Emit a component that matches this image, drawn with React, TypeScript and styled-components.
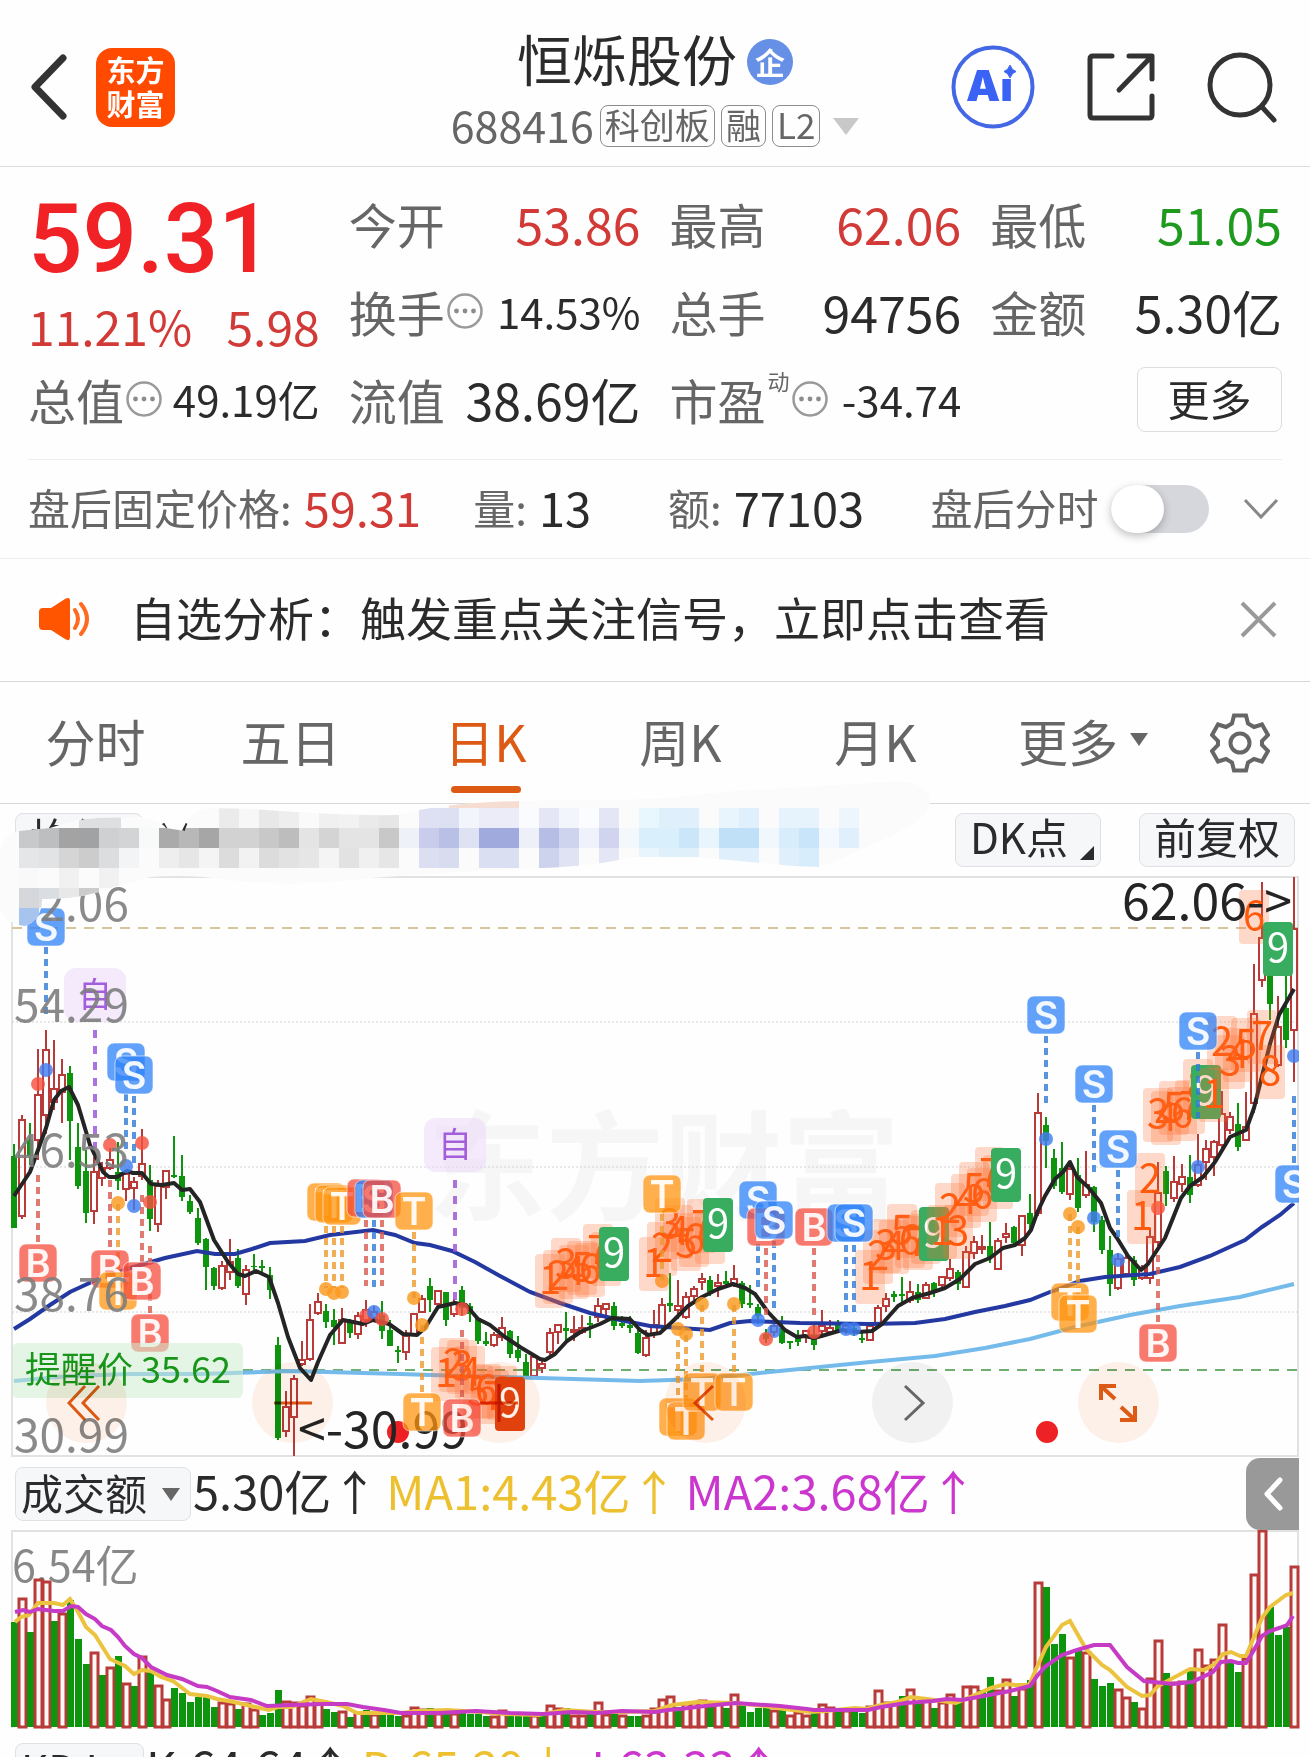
import React, { useState } from "react";
import styled, { createGlobalStyle, css } from "styled-components";

const FONT = '"Noto Sans CJK SC", "Noto Sans", sans-serif';
const RED = "#d13a36";
const BRIGHT_RED = "#f02226";
const GREEN = "#1f9a1f";
const INK = "#2b2b2b";
const GREY = "#666666";
const ORANGE = "#dd5a14";

const GlobalStyle = createGlobalStyle`
  *, *::before, *::after { box-sizing: border-box; }
  body { margin: 0; background: #ffffff; }
  button, input, select { font: inherit; color: inherit; margin: 0; }
  button { border: 0; padding: 0; background: none; cursor: pointer; }
`;

const Page = styled.main`
  height: 100vh;
  overflow: hidden;
  background: #fefefe;
  color: ${INK};
  font-family: ${FONT};
  font-size: 48px;
  line-height: 60px;
  white-space: nowrap;
`;

/* ---------- header ---------- */

const Header = styled.header`
  display: grid;
  grid-template-columns: 1fr auto 1fr;
  height: 167px;
  padding: 0 31px;
  border-bottom: 1px solid #dcdcdc;
`;

const HeaderSide = styled.div<{ $end?: boolean }>`
  display: flex;
  align-items: center;
  padding-top: 8px;
  gap: ${(p) => (p.$end ? "52px" : "28px")};
  justify-content: ${(p) => (p.$end ? "flex-end" : "flex-start")};
`;

const IconButton = styled.button`
  display: flex;
  align-items: center;
  justify-content: center;
`;

const Logo = styled.a`
  display: flex;
  align-items: center;
  justify-content: center;
  width: 79px;
  height: 79px;
  border-radius: 16px;
  background: #ff4a00;
  color: #ffffff;
  font-size: 29px;
  font-weight: 700;
  line-height: 34px;
  padding-bottom: 2px;
  text-decoration: none;
  white-space: pre;
`;

const Heading = styled.div`
  display: flex;
  flex-direction: column;
  align-items: center;
  padding-top: 22px;
`;

const TitleRow = styled.div`
  display: flex;
  align-items: center;
  gap: 10px;
`;

const Title = styled.h1`
  margin: 0;
  font-size: 55px;
  font-weight: 400;
  line-height: 70px;
`;

const CompanyBadge = styled.span`
  display: flex;
  align-items: center;
  justify-content: center;
  width: 46px;
  height: 46px;
  margin-top: 10px;
  border-radius: 50%;
  background: #6690e6;
  color: #ffffff;
  font-size: 30px;
  font-weight: 700;
  line-height: 40px;
  padding-bottom: 2px;
`;

const CodeRow = styled.div`
  display: flex;
  align-items: center;
  gap: 6px;
  height: 68px;
  color: ${GREY};
  font-size: 43px;
  line-height: 56px;
`;

const Code = styled.span`
  padding-bottom: 4px;
`;

const Tag = styled.span`
  display: flex;
  align-items: center;
  height: 42px;
  padding: 0 4px 4px;
  border: 1px solid #8c8c8c;
  border-radius: 8px;
  font-size: 35px;
  line-height: 36px;
`;

const ExpandButton = styled(IconButton)`
  margin-left: 7px;
`;

const Triangle = styled.span<{ $size: number; $color: string }>`
  display: inline-block;
  border-style: solid;
  border-color: ${(p) => p.$color} transparent transparent;
  border-width: ${(p) => p.$size + 4}px ${(p) => p.$size}px 0;
`;

/* ---------- quote ---------- */

const Quote = styled.section`
  display: grid;
  grid-template-columns: repeat(4, minmax(0, 1fr));
  grid-auto-rows: 88px;
  column-gap: 29px;
  margin: 0 28px;
  padding: 12px 0 16px;
  border-bottom: 1px solid #eeeeee;
`;

const PriceBlock = styled.div`
  grid-row: span 2;
  display: flex;
  flex-direction: column;
  color: ${RED};
`;

const Price = styled.strong`
  padding-top: 8px;
  color: ${BRIGHT_RED};
  font-family: Roboto, sans-serif;
  font-size: 96px;
  font-weight: 500;
  line-height: 104px;
`;

const Change = styled.div`
  display: flex;
  justify-content: space-between;
  line-height: 68px;
`;

const Stat = styled.div`
  display: flex;
  align-items: center;
  justify-content: space-between;
`;

const StatLabel = styled.span`
  display: flex;
  align-items: center;
  gap: 2px;
  color: ${GREY};
`;

const StatValue = styled.span<{ $color?: string; $small?: boolean }>`
  color: ${(p) => p.$color ?? INK};
  font-size: ${(p) => (p.$small ? 42 : 50)}px;
`;

const Sup = styled.sup`
  align-self: flex-start;
  font-size: 22px;
  line-height: 22px;
`;

const MoreButton = styled.button`
  justify-self: end;
  align-self: center;
  width: 145px;
  height: 65px;
  padding-bottom: 4px;
  border: 1px solid #dddddd;
  border-radius: 8px;
  font-size: 42px;
  line-height: 60px;
`;

/* ---------- after hours ---------- */

const AfterHours = styled.section`
  display: grid;
  grid-template-columns: 446fr 195fr 263fr 312fr auto;
  align-items: center;
  height: 99px;
  padding: 0 30px 0 28px;
  border-bottom: 1px solid #eeeeee;
`;

const Pair = styled.label`
  display: flex;
  align-items: center;
  gap: 12px;
  color: ${GREY};
  font-size: 42px;
`;

const PairText = styled.span`
  padding-bottom: 4px;
`;

const PairValue = styled(PairText)<{ $color?: string }>`
  color: ${(p) => p.$color ?? INK};
  font-size: 47px;
`;

const Switch = styled.input`
  appearance: none;
  width: 98px;
  height: 48px;
  border-radius: 24px;
  background: #d5d7dd;
  cursor: pointer;
  &::before {
    content: "";
    display: block;
    width: 53px;
    height: 48px;
    border-radius: 26px;
    background: #ffffff;
    box-shadow: 0 3px 8px rgba(0, 0, 0, 0.25);
  }
  &:checked { background: ${ORANGE}; }
  &:checked::before { margin-left: auto; }
`;

/* ---------- notice ---------- */

const Notice = styled.section`
  display: flex;
  align-items: center;
  height: 123px;
  padding: 0 33px 2px 38px;
  border-bottom: 1px solid #d9d9d9;
`;

const NoticeText = styled.a`
  flex: 1;
  margin-left: 38px;
  padding-bottom: 6px;
  color: ${INK};
  font-size: 46px;
  text-decoration: none;
`;

/* ---------- tabs ---------- */

const Tabs = styled.nav`
  display: flex;
  height: 122px;
  border-bottom: 1px solid #d9d9d9;
`;

const Tab = styled.button<{ $active?: boolean; $menu?: boolean }>`
  flex: 1;
  position: relative;
  display: flex;
  align-items: center;
  justify-content: ${(p) => (p.$menu ? "flex-end" : "center")};
  gap: 12px;
  padding: ${(p) => (p.$menu ? "0 22px 6px 0" : "0 13px 6px 9px")};
  color: ${(p) => (p.$active ? ORANGE : GREY)};
  font-size: 50px;
  ${(p) =>
    p.$active &&
    css`
      &::after {
        content: "";
        position: absolute;
        left: calc(50% - 37px);
        bottom: 10px;
        width: 70px;
        height: 7px;
        border-radius: 4px;
        background: ${ORANGE};
      }
    `}
`;

const SettingsButton = styled(IconButton)`
  width: 140px;
`;

/* ---------- chart panel ---------- */

const ChartPanel = styled.section`
  position: relative;
`;

const Toolbar = styled.div`
  display: flex;
  align-items: flex-start;
  gap: 38px;
  height: 68px;
  padding: 9px 15px 0;
`;

const ChipButton = styled.button<{ $push?: boolean }>`
  display: flex;
  align-items: flex-end;
  gap: 10px;
  height: 54px;
  margin-left: ${(p) => (p.$push ? "auto" : "0")};
  padding: 0 14px;
  border: 1px solid #dfe1e5;
  border-radius: 8px;
  background: #f6f7f9;
  font-size: 42px;
  line-height: 52px;
`;

const Corner = styled.i`
  margin: 0 -8px 6px 2px;
  border-style: solid;
  border-width: 0 0 14px 14px;
  border-color: transparent transparent ${INK};
`;

const ChipText = styled.span`
  height: 56px;
`;

const ChipTail = styled.span`
  width: 4px;
`;

const Redaction = styled.svg`
  position: absolute;
  left: 0;
  top: -24px;
  width: 940px;
  height: 150px;
  pointer-events: none;
`;

const ChartArea = styled.div`
  position: relative;
`;

const Plot = styled.svg`
  display: block;
  width: 100%;
  height: auto;
  font-family: ${FONT};
`;

const Controls = styled.div`
  position: absolute;
  left: 46px;
  right: 151px;
  bottom: 15px;
  display: flex;
  justify-content: space-between;
  mix-blend-mode: multiply;
`;

const RoundButton = styled.button<{ $grey?: boolean }>`
  display: flex;
  align-items: center;
  justify-content: center;
  width: 81px;
  height: 81px;
  border-radius: 50%;
  background: ${(p) => (p.$grey ? "#f2f2f2" : "#fdf1e9")};
`;

const IndicatorRow = styled.div`
  display: flex;
  align-items: center;
  gap: 8px;
  height: 72px;
  padding: 0 11px 0 15px;
  font-size: 47px;
`;

const Picker = styled.span`
  position: relative;
  display: flex;
  align-items: center;
  margin-right: -6px;
`;

const PickerSelect = styled.select<{ $width: number }>`
  appearance: none;
  width: ${(p) => p.$width}px;
  height: 54px;
  padding: 0 5px 4px;
  border: 1px solid #dfe1e5;
  border-radius: 8px;
  background: #f6f7f9;
  font-size: 42px;
  line-height: 48px;
`;

const PickerMark = styled.span`
  position: absolute;
  right: 11px;
  display: flex;
  pointer-events: none;
`;

const Reading = styled.span<{ $color?: string }>`
  color: ${(p) => p.$color ?? INK};
  line-height: 64px;
  padding-bottom: 8px;
`;

const DrawerButton = styled.button`
  align-self: stretch;
  display: flex;
  align-items: center;
  justify-content: center;
  width: 53px;
  margin-left: auto;
  border-radius: 14px 0 0 14px;
  background: #999999;
`;

/* ---------- data ---------- */

const STEP = 8;
const X0 = 14;
const BAR_RED = "#b83b3a";
const BAR_GREEN = "#0d960d";

// One candle per entry: colour, high, body top, body bottom, low.
const CANDLES = `g1144,1156,1228,1228 r1115,1120,1216,1219 g1123,1140,1156,1165 r1049,1095,1140,1160 r1030,1050,1115,1134 r1040,1089,1102,1110 r1059,1075,1092,1123 g1066,1073,1121,1160 g1123,1147,1186,1189 g1150,1171,1213,1223
r1157,1172,1211,1224 r1162,1168,1178,1186 r1148,1160,1168,1170 g1142,1172,1181,1190 r1170,1174,1189,1201 r1177,1182,1188,1210 r1129,1164,1176,1180 g1165,1180,1219,1231 r1180,1186,1224,1232 r1170,1171,1187,1199
g1136,1175,1177,1178 g1155,1176,1197,1201 g1195,1201,1212,1214 g1208,1218,1243,1245 g1238,1239,1267,1290 g1267,1268,1286,1290 r1261,1266,1288,1290 r1239,1262,1272,1280 g1249,1258,1286,1288 r1265,1270,1294,1305
g1254,1266,1267,1270 g1260,1266,1268,1272 g1267,1275,1290,1299 g1337,1345,1438,1440 r1391,1407,1431,1437 r1375,1379,1417,1456 r1341,1360,1364,1366 r1304,1320,1359,1361 r1293,1302,1313,1315 g1304,1311,1322,1328
g1309,1320,1327,1345 r1308,1320,1343,1344 g1319,1322,1333,1338 r1312,1316,1334,1339 r1300,1310,1320,1327 r1306,1312,1318,1322 g1301,1315,1331,1339 g1320,1330,1346,1346 g1346,1350,1352,1363 r1330,1336,1352,1360
r1313,1314,1334,1336 r1295,1299,1312,1313 g1278,1286,1300,1312 r1290,1291,1304,1306 g1292,1292,1320,1326 r1299,1303,1314,1317 g1286,1290,1308,1316 g1303,1306,1314,1322 g1317,1318,1341,1344 g1332,1341,1344,1346
r1332,1335,1345,1347 r1317,1328,1337,1341 g1330,1331,1354,1358 g1336,1350,1358,1362 g1354,1362,1376,1376 r1354,1357,1376,1376 r1358,1364,1368,1373 r1328,1333,1352,1357 r1324,1325,1332,1344 g1312,1328,1331,1342
r1316,1330,1332,1341 r1315,1328,1332,1334 g1316,1323,1325,1338 r1298,1306,1317,1322 r1303,1304,1309,1319 g1302,1306,1326,1330 g1316,1323,1326,1328 g1316,1325,1328,1333 g1326,1333,1353,1354 r1330,1338,1355,1357
r1310,1325,1334,1338 r1298,1305,1326,1329 g1273,1303,1306,1312 r1280,1306,1310,1319 r1292,1297,1317,1319 r1286,1289,1296,1300 r1273,1279,1282,1290 g1276,1280,1292,1296 r1274,1283,1286,1297 g1271,1281,1284,1286
r1265,1279,1284,1287 g1281,1283,1304,1308 g1285,1303,1305,1308 g1304,1307,1316,1324 g1329,1334,1339,1343 r1321,1326,1332,1336 g1316,1328,1343,1344 g1341,1341,1343,1349 g1330,1337,1342,1346 r1330,1331,1337,1343
g1322,1334,1345,1350 r1310,1326,1331,1338 r1320,1328,1332,1335 g1320,1323,1330,1333 r1322,1326,1330,1334 g1322,1328,1332,1336 g1333,1338,1340,1343 r1323,1326,1340,1341 r1305,1308,1324,1327 r1293,1299,1306,1312
g1291,1294,1297,1302 g1277,1294,1296,1303 r1281,1292,1300,1303 g1284,1292,1300,1303 r1282,1285,1298,1299 g1282,1283,1293,1297 r1276,1277,1285,1289 r1259,1269,1278,1281 g1270,1272,1284,1290 r1246,1252,1287,1287
r1236,1242,1253,1259 r1235,1247,1249,1254 g1222,1246,1258,1263 r1238,1241,1269,1270 r1223,1234,1237,1243 g1226,1227,1243,1246 r1215,1216,1245,1256 g1194,1213,1224,1230 r1093,1113,1213,1216 g1117,1125,1141,1168
g1149,1158,1186,1189 g1142,1168,1192,1194 r1165,1169,1194,1200 g1158,1175,1208,1212 r1151,1185,1195,1198 g1186,1187,1222,1232 g1216,1220,1250,1254 g1236,1250,1284,1296 r1253,1259,1288,1290 r1254,1258,1274,1276
g1256,1260,1280,1286 r1265,1269,1278,1280 r1228,1237,1278,1284 r1162,1193,1242,1246 g1166,1171,1194,1206 r1156,1182,1198,1202 r1164,1177,1184,1192 g1155,1177,1195,1203 r1134,1165,1185,1187 r1140,1149,1162,1180
r1140,1142,1157,1176 r1091,1114,1145,1148 r1112,1117,1130,1134 g1103,1124,1147,1151 r1092,1127,1140,1141 r964,1014,1103,1113 r882,938,980,987 g970,975,1004,1020 r996,1027,1065,1067 g970,1008,1040,1048 r877,929,1030,1082`
  .split(/\s+/)
  .map((s) => ({ up: s[0] === "r", v: s.slice(1).split(",").map(Number) }));

// Turnover bars: colour and distance of the bar top from the row top, in thirds of a pixel.
const VOLUMES = `g516 r444 g546 r387 r393 g513 r490 g450 g567 g642 r607 g675 r651 g618 r699 g709 r618 g665 r706 r747 g714 g729 g756 g740 g740 g771 r757 r760 g777 r760 r777 g795 g789 g720 r753 r756 r765 r738 r760 g777 g786 r783 g800 r786 g780 r792 g790 g790 g798 r795 r771 r777 g775 r790 g790 r790 g790 g792 g792 g798 r798 r781 g797 g797 g797 r795 g797 r765 r774 g774 r795 r795 g792 r757 r792 g792 r795 g798 g797 r795
r775 r747 r738 g770 r760 r757 r750 g766 r757 g774 r732 g766 g786 g774 g770 r780 g780 r795 r786 r795 g780 r763 r771 g783 r780 g783 g789 r768 r720 r757 r760 g738 r717 g756 r750 g774 r757 r732 g757 r708 r708 g720 g681 r720 r687 g738 r714 g690 r396 g411 g582 g552 r620 g600 r606 g687 g708 g699 r717 r741 g756 r774 r684 r570 g669 r696 r693 g663 r597 r645 r627 r522 g639 g666 r624 r372 r240 g471 g555 g531 r348`
  .split(/\s+/)
  .map((s) => ({ up: s[0] === "r", top: Math.round(1450 + Number(s.slice(1)) / 3) }));

const MA_SHORT =
  "14,1196 30,1172 46,1128 54,1100 61,1091 69,1087 78,1105 90,1145 103,1172 109,1177 117,1177 127,1171 133,1173 142,1173 151,1184 162,1185 174,1183 182,1190 190,1189 200,1202 214,1240 228,1262 238,1274 245,1276 256,1271 269,1277 278,1303 288,1337 300,1368 311,1380 318,1362 330,1335 343,1320 363,1324 373,1320 389,1324 403,1334 417,1335 425,1328 438,1307 455,1303 466,1305 478,1319 490,1325 505,1337 520,1347 540,1359 545,1360 555,1354 567,1341 582,1331 600,1324 612,1318 630,1319 640,1330 648,1335 660,1333 672,1322 688,1306 702,1297 718,1289 733,1284 745,1288 755,1294 768,1312 785,1330 797,1337 805,1336 814,1338 825,1335 842,1330 858,1332 872,1331 882,1324 898,1306 912,1298 930,1293 945,1288 960,1279 975,1264 990,1258 1003,1248 1015,1245 1025,1238 1031,1230 1037,1213 1045,1196 1055,1179 1063,1172 1070,1162 1077,1177 1088,1187 1101,1203 1110,1228 1117,1238 1128,1256 1141,1270 1148,1264 1165,1238 1181,1198 1190,1186 1203,1177 1215,1162 1230,1137 1246,1130 1254,1108 1262,1076 1270,1044 1279,1015 1294,989";
const MA_MID =
  "14,1329 30,1319 50,1305 70,1292 96,1280 130,1268 165,1258 197,1251 215,1254 235,1254 252,1249 270,1243 305,1241 330,1235 373,1230 395,1235 415,1243 430,1245 452,1251 475,1262 500,1276 530,1292 560,1303 590,1313 620,1320 650,1326 680,1328 710,1330 730,1323 750,1321 800,1323 870,1324 915,1323 945,1319 975,1312 1005,1306 1030,1300 1050,1292 1080,1281 1105,1277 1150,1274 1180,1267 1210,1256 1245,1240 1262,1227 1280,1215 1294,1203";
const MA_LONG =
  "14,1381 70,1376 130,1374 200,1374 290,1371 400,1374 430,1375 540,1378 640,1381 700,1379 760,1373 870,1362 935,1356 985,1348 1030,1339 1075,1327 1130,1315 1180,1306 1240,1297 1294,1284";
const VOL_MA1 =
  "15,1622 21,1617 29,1615 38,1603 54,1603 63,1605 70,1599 77,1610 86,1627 95,1635 110,1659 125,1666 134,1674 142,1670 151,1671 161,1677 173,1681 190,1694 207,1696 217,1699 234,1702 251,1706 269,1710 278,1707 292,1707 303,1702 311,1699 326,1702 343,1706 357,1713 384,1713 401,1713 418,1711 447,1710 480,1712 505,1714 539,1715 564,1710 597,1712 622,1712 655,1711 672,1705 697,1702 734,1703 764,1706 784,1709 810,1712 826,1711 855,1708 866,1709 881,1705 897,1702 911,1697 927,1699 956,1703 975,1695 991,1688 1006,1684 1016,1685 1029,1685 1037,1667 1046,1647 1062,1625 1070,1621 1086,1649 1102,1665 1110,1670 1127,1687 1142,1696 1150,1695 1158,1686 1173,1678 1190,1669 1204,1670 1215,1664 1223,1654 1231,1652 1240,1656 1246,1656 1254,1637 1262,1618 1270,1607 1286,1595 1293,1593";
const VOL_MA2 =
  "15,1612 23,1610 30,1612 38,1609 54,1611 63,1611 71,1606 78,1607 86,1614 95,1619 102,1626 111,1630 118,1637 125,1646 134,1654 142,1658 151,1667 167,1675 182,1679 198,1686 207,1687 217,1691 230,1697 251,1700 267,1706 292,1705 322,1704 347,1704 363,1707 384,1710 401,1713 439,1713 476,1711 510,1713 543,1714 572,1712 597,1713 622,1711 655,1712 668,1710 680,1709 705,1706 736,1703 749,1704 780,1706 807,1709 814,1710 868,1710 881,1707 906,1703 933,1701 947,1699 962,1700 989,1695 1010,1691 1030,1686 1037,1676 1046,1666 1062,1655 1077,1650 1094,1645 1110,1645 1127,1667 1144,1681 1173,1684 1192,1682 1213,1672 1221,1662 1231,1661 1238,1663 1246,1663 1254,1650 1262,1636 1270,1631 1279,1628 1287,1625 1293,1616";

type Kind = "S" | "B" | "T";
const BADGE: Record<Kind, string> = { S: "#2b80f8", B: "#f64c3c", T: "#ff940f" };
const STEM: Record<string, string> = { S: "#2f79d6", B: "#d85a50", T: "#eb9a2d", P: "#9a4fd6" };
const DOT: Record<Kind, string> = { S: "#3f7df0", B: "#f6503f", T: "#fb9a1e" };

const BADGES: [Kind, number, number][] = [
  ["S", 46, 927], ["S", 126, 1062], ["S", 134, 1075], ["B", 38, 1263], ["B", 110, 1269], ["T", 118, 1291],
  ["B", 142, 1281], ["B", 150, 1333], ["T", 326, 1202], ["T", 334, 1204], ["T", 342, 1206], ["B", 366, 1198],
  ["S", 374, 1199], ["B", 382, 1199], ["T", 414, 1211], ["T", 422, 1412], ["B", 462, 1418], ["T", 662, 1194],
  ["S", 758, 1200], ["B", 766, 1227], ["S", 774, 1220], ["B", 814, 1227], ["S", 846, 1223], ["S", 854, 1223],
  ["T", 678, 1417], ["T", 686, 1421], ["T", 702, 1392], ["T", 734, 1392], ["S", 1046, 1015], ["S", 1094, 1084],
  ["S", 1118, 1149], ["T", 1070, 1302], ["T", 1078, 1314], ["B", 1158, 1343], ["S", 1198, 1031], ["S", 1294, 1184],
];

const STEMS: [string, number, number, number][] = [
  ["P", 95, 1030, 1148], ["P", 455, 1180, 1300], ["S", 46, 947, 1015], ["B", 38, 1175, 1243], ["S", 126, 1094, 1150],
  ["S", 134, 1096, 1163], ["B", 110, 1180, 1250], ["T", 118, 1204, 1272], ["B", 142, 1195, 1262], ["B", 150, 1246, 1313],
  ["T", 326, 1226, 1288], ["T", 334, 1226, 1288], ["T", 342, 1226, 1288], ["B", 366, 1220, 1286], ["S", 374, 1220, 1288],
  ["B", 382, 1220, 1286], ["T", 414, 1232, 1298], ["T", 422, 1325, 1392], ["B", 462, 1330, 1400], ["T", 662, 1214, 1280],
  ["S", 758, 1244, 1288], ["B", 766, 1248, 1315], ["S", 774, 1241, 1308], ["B", 814, 1248, 1315], ["S", 846, 1245, 1312],
  ["S", 854, 1245, 1312], ["T", 678, 1340, 1398], ["T", 686, 1335, 1400], ["T", 702, 1305, 1372], ["T", 734, 1305, 1372],
  ["S", 1046, 1036, 1103], ["S", 1094, 1105, 1172], ["S", 1118, 1170, 1237], ["T", 1070, 1214, 1282], ["T", 1078, 1227, 1295],
  ["B", 1158, 1255, 1322], ["S", 1198, 1052, 1118], ["S", 1294, 1096, 1163],
];

const DOTS: [Kind, number, number][] = [
  ["S", 46, 1070], ["B", 38, 1084], ["B", 110, 1145], ["S", 126, 1166], ["B", 142, 1143], ["T", 118, 1203], ["S", 134, 1206],
  ["B", 150, 1202], ["T", 326, 1289], ["T", 334, 1293], ["T", 342, 1292], ["B", 366, 1316], ["S", 374, 1312], ["B", 382, 1319],
  ["T", 414, 1298], ["T", 422, 1325], ["B", 462, 1309], ["T", 662, 1281], ["T", 678, 1329], ["T", 686, 1334], ["T", 702, 1304],
  ["T", 734, 1304], ["S", 758, 1320], ["S", 774, 1331], ["B", 766, 1339], ["B", 814, 1332], ["S", 846, 1329], ["S", 854, 1329],
  ["S", 1046, 1139], ["S", 1094, 1218], ["S", 1118, 1260], ["S", 1198, 1167], ["S", 1294, 1056], ["T", 1070, 1214],
  ["T", 1078, 1227], ["B", 1158, 1208],
];

// Nine-turn counts: centre of the first tile, tile tops, colour of the closing tile.
const COUNTS: { x: number; tops: number[]; end: string }[] = [
  { x: 446, tops: [1347, 1338, 1340, 1346, 1365, 1364, 1370, 1366, 1377], end: "#e2440e" },
  { x: 550, tops: [1254, 1250, 1238, 1245, 1241, 1243, 1224, 1232, 1227], end: "#38ad60" },
  { x: 654, tops: [1237, 1222, 1198, 1205, 1217, 1213, 1199, 1210, 1198], end: "#38ad60" },
  { x: 870, tops: [1250, 1230, 1219, 1220, 1204, 1214, 1216, 1210, 1207], end: "#38ad60" },
  { x: 942, tops: [1205, 1183, 1205, 1174, 1162, 1168, 1147, 1155, 1148], end: "#38ad60" },
  { x: 1142, tops: [1190, 1153, 1088, 1091, 1081, 1087, 1080, 1059, 1065], end: "#38ad60" },
  { x: 1214, tops: [1068, 1016, 1035, 1028, 1018, 890, 1010, 1045, 922], end: "#38ad60" },
];

const MOSAIC: [number, string][] = [
  [808, "219ebebeb 239f7f7f7 259e8e8e8 279eeeeee 299fafafa 319f0f0f0 339f2f2f2 359eaeaea 379e6e6e6 419dfe0f3 439dde0f2 459f3f5fd 479ececf8 499ececf8 519fafbff 539e4e6f5 559f3f5fd 579fafcff 599e4e6f5 639e8f6fd 659dff0fb 679dfeffb 719e9f5fd 739dfeffb 779e6f2fc 799e6f2fc 839eef6fd"],
  [828, "019c8c9cb 039bdbec0 059a3a3a3 079a1a2a4 099cfd0d2 119d3d4d6 139f8f9f9 159aaaaaa 179b8b8b8 199a6a6a6 219d2d2d2 239d2d2d2 259c8c8c8 279bdbdbd 299e4e4e4 319d4d4d4 339e4e4e4 359e4e4e4 379c8c8c8 399eff1f8 419c9cceb 439b9c0e6 459dfe2f2 479a1aadd 499a1aadd 519edeff9 539b7bee6 559cfd4ee 579f0f2fb 599d0d4ee 619f3f8fd 639d9effc 659d9effc 679cbe6f8 699e9f5fd 719bfe0f7 739bfe0f7 759f0f8fe 779d8edfb 799c9e5f9 819f3f9fe 839dfeffb"],
  [848, "019e4e6e8 039e2e3e4 059d5d5d5 079cccccc 099dcdddf 119f3f4f6 159eeeeee 179e6e6e6 199f4f4f4 219dcdcdc 239f2f2f2 259dcdcdc 279e2e2e2 299e6e6e6 319f4f4f4 339e2e2e2 359f0f0f0 379e6e6e6 419dcdff1 439d7dcef 479dbdff2 499dbdff2 539cdd2ed 559e0e3f4 599e4e6f5 639e9f5fd 659dff0fb 679dff0fb 719dfeffb 739dfeffb 779dfeffb 799d8edfb"],
  [868, "019f9f9f9 059f1f1f1 099f1f1f1"],
  [888, "019d5d7da 039dadde2 059e8e8e8 079cccccc"],
  [908, "019a7c4ee"],
];

const BLOB =
  "M0 853 Q2 835 19 831 L50 828 Q75 819 100 818 L140 817 Q160 820 166 828 L185 831 Q190 809 210 808 L250 809 Q340 816 398 815 Q440 803 520 801 L655 799 L735 791 L889 782 Q930 780 930 803 Q926 820 889 837 L859 850 L839 860 L819 867 L793 866 L697 857 L630 857 Q600 866 540 868 L460 872 L370 878 Q290 888 230 880 Q190 874 150 877 Q130 883 110 888 Q80 900 42 899 Q42 920 25 926 Q6 924 0 908 Z";

/* ---------- drawings ---------- */

const InfoIcon = () => (
  <svg width="36" height="36" viewBox="0 0 36 36" fill="none">
    <circle cx="18" cy="18" r="16.5" stroke="#9a9a9a" strokeWidth="2.5" />
    {[9.5, 18, 26.5].map((x) => (
      <circle key={x} cx={x} cy="18" r="2.4" fill="#8c8c8c" />
    ))}
  </svg>
);

const Redacted = () => (
  <Redaction viewBox="0 780 940 150" aria-hidden="true">
    <clipPath id="blob">
      <path d={BLOB} />
    </clipPath>
    <path d="M162 824 l4 7 M188 824 l-4 8" stroke={INK} strokeWidth="5" />
    <path d={BLOB} fill="#fbfbfb" />
    <g clipPath="url(#blob)">
      <rect x="449" y="801" width="70" height="7" fill="#f6ddd2" />
      <rect x="79" y="815" width="42" height="13" fill="#dedfe1" />
      {MOSAIC.map(([y, cells]) =>
        cells.split(" ").map((c) => (
          <rect key={y + c} x={Number(c.slice(0, 3))} y={y} width="20" height="20" fill={"#" + c.slice(3)} />
        )),
      )}
    </g>
  </Redaction>
);

const PriceChart = () => (
  <Plot viewBox="0 872 1310 586" role="img" aria-label="日K">
    <clipPath id="plot">
      <rect x="11" y="873" width="1288" height="585" />
    </clipPath>
    <text x="428" y="1211" fontSize="118" fontWeight="700" fill="#f6f6f6">东方财富</text>
    <rect x="12" y="877" width="1286" height="579" fill="none" stroke="#e2e2e2" strokeWidth="2" />
    {[1022, 1167, 1312].map((y) => (
      <line key={y} x1="12" x2="1298" y1={y} y2={y} stroke="#d2d2d2" strokeDasharray="2 2" />
    ))}
    <line x1="12" x2="1298" y1="928" y2="928" stroke="#d6c59c" strokeWidth="2" strokeDasharray="10 8" />
    <g clipPath="url(#plot)">
      <line x1="243" x2="1298" y1="1370" y2="1370" stroke="#6fae6f" strokeWidth="2" strokeDasharray="10 8" />
      {CANDLES.map(({ up, v: [hi, top, bottom, lo] }, i) => {
        const x = X0 + i * STEP;
        const h = Math.max(bottom - top, 1);
        return up ? (
          <g key={i} stroke={BAR_RED} strokeWidth="2" fill="none">
            <path d={`M${x} ${hi}V${top}M${x} ${bottom}V${lo}`} />
            <rect x={x - 3} y={top} width="6" height={h} />
          </g>
        ) : (
          <g key={i} fill={BAR_GREEN}>
            <rect x={x - 1} y={hi} width="2" height={lo - hi} />
            <rect x={x - 3} y={top} width="6" height={h} />
          </g>
        );
      })}
      <polyline points={MA_LONG} fill="none" stroke="#74bbeb" strokeWidth="4" />
      <polyline points={MA_MID} fill="none" stroke="#2338a0" strokeWidth="4" />
      <polyline points={MA_SHORT} fill="none" stroke="#242424" strokeWidth="4" strokeLinejoin="round" />
      {DOTS.map(([k, x, y], i) => (
        <circle key={i} cx={x} cy={y} r="7" fill={DOT[k]} fillOpacity="0.82" />
      ))}
      <circle cx="398" cy="1432" r="11" fill="#ee2224" />
      <circle cx="1047" cy="1432" r="11" fill="#ee2224" />
      <text x="298" y="1448" fontSize="50" fill="#242424">&lt;-30.99</text>
      {[[95, 995], [455, 1145]].map(([x, y]) => (
        <g key={x}>
          <rect x={x - 31} y={y - 27} width="62" height="54" rx="12" fill="#e9d5fa" fillOpacity="0.5" />
          <text x={x} y={y + 12} fontSize="34" textAnchor="middle" fill="#a35fdb">自</text>
        </g>
      ))}
      {COUNTS.map(({ x, tops, end }) =>
        tops.map((top, i) => {
          const n = i + 1;
          const last = n === 9;
          const cx = x + i * STEP;
          return (
            <g key={`${x}-${n}`}>
              <rect x={cx - 15} y={top} width="30" height="54" rx="4" fill={last ? end : "#ff6a2a"} fillOpacity={last ? 1 : 0.25} />
              <text x={cx} y={top + 40} fontSize="40" textAnchor="middle" fill={last ? "#ffffff" : "#ff5a0c"}>{n}</text>
            </g>
          );
        }),
      )}
      {STEMS.map(([k, x, y1, y2], i) => (
        <line key={i} x1={x} x2={x} y1={y1} y2={y2} stroke={STEM[k]} strokeOpacity="0.8" strokeWidth="4" strokeDasharray={k === "P" ? "8 8" : "7 5"} />
      ))}
      {BADGES.map(([k, x, y], i) => (
        <g key={i}>
          <rect x={x - 19} y={y - 19} width="38" height="38" rx="7" fill={BADGE[k]} fillOpacity="0.74" stroke="#ffffff" strokeOpacity="0.6" />
          <text x={x} y={y + 14} fontFamily="Inter, sans-serif" fontSize="38" fontWeight="600" textAnchor="middle" fill="#ffffff" fillOpacity="0.92">{k}</text>
        </g>
      ))}
    </g>
    <rect x="12" y="1343" width="231" height="55" rx="6" fill="#cdebd0" fillOpacity="0.55" />
    <text x="25" y="1383" fontSize="36" fill="#18961a">提醒价 35.62</text>
    <g fontSize="46" fill="#7d7d7d" fillOpacity="0.9">
      <text x="14" y="921">62.06</text>
      <text x="14" y="1022">54.29</text>
      <text x="14" y="1167">46.53</text>
      <text x="14" y="1311">38.76</text>
      <text x="14" y="1452">30.99</text>
    </g>
    <text x="1292" y="920" fontSize="50" textAnchor="end" fill="#242424">62.06-&gt;</text>
  </Plot>
);

const VolumeChart = () => (
  <Plot viewBox="0 1530 1310 204" role="img" aria-label="成交额">
    <path d="M12 1728 V1531 H1298 V1728" fill="none" stroke="#e2e2e2" strokeWidth="2" />
    <text x="12" y="1582" fontSize="43" fill="#888888">6.54亿</text>
    {VOLUMES.map(({ up, top }, i) => {
      const x = X0 + i * STEP;
      return up ? (
        <rect key={i} x={x - 3} y={top + 1} width="7" height={1726 - top} fill="#fff8f6" stroke={BAR_RED} strokeWidth="3" />
      ) : (
        <rect key={i} x={x - 3} y={top} width="7" height={1727 - top} fill={BAR_GREEN} />
      );
    })}
    <polyline points={VOL_MA1} fill="none" stroke="#ecc33f" strokeWidth="4" />
    <polyline points={VOL_MA2} fill="none" stroke="#c63bc6" strokeWidth="4" />
  </Plot>
);

const TABS = ["分时", "五日", "日K", "周K", "月K"];

export default function App() {
  const [tab, setTab] = useState("日K");
  return (
    <Page>
      <GlobalStyle />
      <Header>
        <HeaderSide>
          <IconButton aria-label="返回">
            <svg width="37" height="66" viewBox="0 0 37 66" fill="none" stroke="#333" strokeWidth="7" strokeLinecap="round" strokeLinejoin="round">
              <path d="M32 4 4 33l28 29" />
            </svg>
          </IconButton>
          <Logo href="#">{"东方\n财富"}</Logo>
        </HeaderSide>
        <Heading>
          <TitleRow>
            <Title>恒烁股份</Title>
            <CompanyBadge>企</CompanyBadge>
          </TitleRow>
          <CodeRow>
            <Code>688416</Code>
            <Tag>科创板</Tag>
            <Tag>融</Tag>
            <Tag>L2</Tag>
            <ExpandButton aria-label="展开">
              <Triangle $size={13} $color="#c8c8c8" />
            </ExpandButton>
          </CodeRow>
        </Heading>
        <HeaderSide $end>
          <IconButton aria-label="Ai">
            <svg width="84" height="84" viewBox="0 0 84 84">
              <circle cx="42" cy="42" r="39.5" fill="#fff" stroke="#4467e6" strokeWidth="4" />
              <text x="15" y="56" fontFamily="Inter, sans-serif" fontSize="43" fontWeight="900" fill="#3a62f4">Ai</text>
              <rect x="46" y="16" width="24" height="18" fill="#fff" />
              <path d="M59 20q1.500 5 6 6.500q-4.500 1.500-6 6.500q-1.500-5-6-6.500q4.500-1.500 6-6.500Z" fill="#3a62f4" stroke="#3a62f4" strokeWidth="1" />
            </svg>
          </IconButton>
          <IconButton aria-label="分享">
            <svg width="68" height="70" viewBox="0 0 68 70" fill="none" stroke="#333" strokeWidth="5" strokeLinecap="round" strokeLinejoin="round">
              <path d="M25 4H6Q3 4 3 7V63Q3 66 6 66H62Q65 66 65 63V44M42 4H65V27M64 5 32 38" />
            </svg>
          </IconButton>
          <IconButton aria-label="搜索">
            <svg width="72" height="72" viewBox="0 0 72 72" fill="none" stroke="#333" strokeWidth="5" strokeLinecap="round">
              <circle cx="33" cy="34" r="30" />
              <path d="M55 56l12 13" />
            </svg>
          </IconButton>
        </HeaderSide>
      </Header>

      <Quote>
        <PriceBlock>
          <Price>59.31</Price>
          <Change>
            <span>11.21%</span>
            <span>5.98</span>
          </Change>
        </PriceBlock>
        <Stat><StatLabel>今开</StatLabel><StatValue $color={RED}>53.86</StatValue></Stat>
        <Stat><StatLabel>最高</StatLabel><StatValue $color={RED}>62.06</StatValue></Stat>
        <Stat><StatLabel>最低</StatLabel><StatValue $color={GREEN}>51.05</StatValue></Stat>
        <Stat><StatLabel>换手<InfoIcon /></StatLabel><StatValue $small>14.53%</StatValue></Stat>
        <Stat><StatLabel>总手</StatLabel><StatValue>94756</StatValue></Stat>
        <Stat><StatLabel>金额</StatLabel><StatValue>5.30亿</StatValue></Stat>
        <Stat><StatLabel>总值<InfoIcon /></StatLabel><StatValue $small>49.19亿</StatValue></Stat>
        <Stat><StatLabel>流值</StatLabel><StatValue>38.69亿</StatValue></Stat>
        <Stat><StatLabel>市盈<Sup>动</Sup><InfoIcon /></StatLabel><StatValue $small>-34.74</StatValue></Stat>
        <MoreButton>更多</MoreButton>
      </Quote>

      <AfterHours>
        <Pair as="div"><PairText>盘后固定价格:</PairText><PairValue $color={RED}>59.31</PairValue></Pair>
        <Pair as="div"><PairText>量:</PairText><PairValue>13</PairValue></Pair>
        <Pair as="div"><PairText>额:</PairText><PairValue>77103</PairValue></Pair>
        <Pair><PairText>盘后分时</PairText><Switch type="checkbox" role="switch" /></Pair>
        <IconButton aria-label="展开盘后">
          <svg width="38" height="24" viewBox="0 0 38 24" fill="none" stroke="#888" strokeWidth="3">
            <path d="M3 3l16 17L35 3" />
          </svg>
        </IconButton>
      </AfterHours>

      <Notice>
        <svg width="54" height="46" viewBox="0 0 54 46" fill="none">
          <path d="M1 16q0-4 4-4h8L27 3q5-3 5 2v36q0 5-5 2L13 34H5q-4 0-4-4Z" fill="#ff5500" />
          <path d="M37 14q6 9 0 18M43 8q12 15 0 30" stroke="#ff6a20" strokeWidth="4" strokeLinecap="round" />
        </svg>
        <NoticeText href="#">自选分析：触发重点关注信号，立即点击查看</NoticeText>
        <IconButton aria-label="关闭">
          <svg width="37" height="37" viewBox="0 0 37 37" stroke="#999" strokeWidth="4">
            <path d="M2 2l33 33M35 2 2 35" />
          </svg>
        </IconButton>
      </Notice>

      <Tabs>
        {TABS.map((t) => (
          <Tab key={t} $active={t === tab} onClick={() => setTab(t)}>{t}</Tab>
        ))}
        <Tab $menu>更多<Triangle $size={9} $color={GREY} /></Tab>
        <SettingsButton aria-label="设置">
          <svg width="60" height="60" viewBox="0 0 60 60" fill="none" stroke={GREY} strokeWidth="4">
            <path d="M24 2.500H36L38 10.500L44 14L52 11.500L58 22L52 28V32L58 38L52 48.500L44 46L38 49.500L36 57.500H24L22 49.500L16 46L8 48.500L2 38L8 32V28L2 22L8 11.500L16 14L22 10.500Z" />
            <circle cx="30" cy="30" r="9.500" />
          </svg>
        </SettingsButton>
      </Tabs>

      <ChartPanel>
        <Toolbar>
          <ChipButton><ChipText>均线</ChipText><ChipTail /></ChipButton>
          <ChipButton $push><ChipText>DK点</ChipText><Corner /></ChipButton>
          <ChipButton><ChipText>前复权</ChipText></ChipButton>
        </Toolbar>
        <ChartArea>
          <PriceChart />
          <Controls>
            <RoundButton aria-label="最左">
              <svg width="40" height="40" viewBox="0 0 40 40" fill="none" stroke={ORANGE} strokeWidth="3"><path d="M18 3 2 20l16 17M32 3 16 20l16 17" /></svg>
            </RoundButton>
            <RoundButton aria-label="缩小">
              <svg width="40" height="40" viewBox="0 0 40 40" stroke={ORANGE} strokeWidth="3"><path d="M1 20h38" /></svg>
            </RoundButton>
            <RoundButton aria-label="放大">
              <svg width="40" height="40" viewBox="0 0 40 40" stroke={ORANGE} strokeWidth="3"><path d="M1 20h38M20 1v38" /></svg>
            </RoundButton>
            <RoundButton aria-label="左移">
              <svg width="40" height="40" viewBox="0 0 40 40" fill="none" stroke={ORANGE} strokeWidth="3"><path d="M27 3 9 20l18 17" /></svg>
            </RoundButton>
            <RoundButton $grey aria-label="右移">
              <svg width="40" height="40" viewBox="0 0 40 40" fill="none" stroke={GREY} strokeWidth="3"><path d="M13 3l18 17-18 17" /></svg>
            </RoundButton>
            <RoundButton aria-label="全屏">
              <svg width="40" height="40" viewBox="0 0 40 40" fill="none" stroke={ORANGE} strokeWidth="4"><path d="M3 17V3H18M4 4 17 16M37 23V37H22M36 36 23 24" /></svg>
            </RoundButton>
          </Controls>
        </ChartArea>
        <Redacted />
      </ChartPanel>

      <IndicatorRow>
        <Picker>
          <PickerSelect $width={176} aria-label="指标一"><option>成交额</option></PickerSelect>
          <PickerMark><Triangle $size={9} $color={GREY} /></PickerMark>
        </Picker>
        <Reading>5.30亿↑</Reading>
        <Reading $color="#ecc02f">MA1:4.43亿↑</Reading>
        <Reading $color="#cb36cf">MA2:3.68亿↑</Reading>
        <DrawerButton aria-label="展开指标">
          <svg width="22" height="42" viewBox="0 0 22 42" fill="none" stroke="#fff" strokeWidth="5" strokeLinecap="round" strokeLinejoin="round"><path d="M18 7 5 21l13 14" /></svg>
        </DrawerButton>
      </IndicatorRow>
      <VolumeChart />
      <IndicatorRow>
        <Picker>
          <PickerSelect $width={129} aria-label="指标二"><option>KDJ</option></PickerSelect>
        </Picker>
        <Reading>K:64.64↑</Reading>
        <Reading $color="#ecc02f">D:65.29↓</Reading>
        <Reading $color="#cb36cf">J:63.33↑</Reading>
      </IndicatorRow>
    </Page>
  );
}
